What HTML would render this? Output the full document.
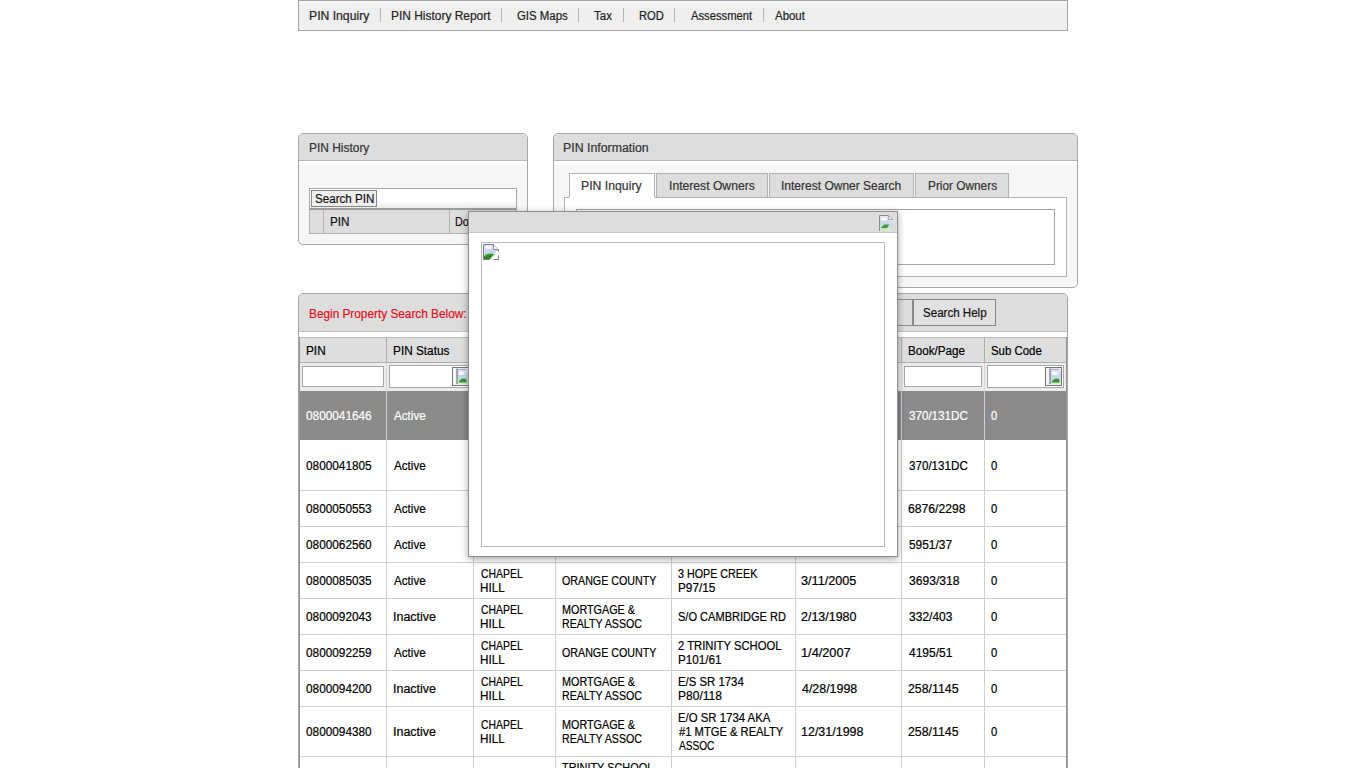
<!DOCTYPE html>
<html>
<head>
<meta charset="utf-8">
<title>PIN Inquiry</title>
<style>
html,body{margin:0;padding:0;}
body{width:1366px;height:768px;overflow:hidden;background:#fff;position:relative;font-family:"Liberation Sans",sans-serif;font-size:12px;color:#222;}
.a{position:absolute;box-sizing:border-box;}
.t{position:absolute;white-space:nowrap;line-height:14px;font-size:12px;transform-origin:0 0;-webkit-text-stroke:0.2px currentColor;}
#nav{left:298px;top:0;width:770px;height:31px;border:1px solid #a3a3a3;background:linear-gradient(#f7f7f7 0,#efefef 6px,#efefef 100%);}
.sep{position:absolute;top:8px;width:1px;height:14px;background:#b4b4b4;}
.panel{border:1px solid #a6a6a6;border-radius:5px;background:linear-gradient(to bottom,#fff 0,#fff 28px,#f6f6f6 33px,#f6f6f6 100%);}
.phead{position:absolute;left:0;top:0;right:0;height:26px;background:#ddd;border-bottom:1px solid #b7b7b7;border-radius:4px 4px 0 0;}
.tab{position:absolute;box-sizing:border-box;top:173px;height:25px;border:1px solid #b2b2b2;background:#ddd;}
.tab.on{background:#fff;border-bottom-color:#fff;}
.hc{position:absolute;box-sizing:border-box;top:337px;height:26px;background:#dedede;border-left:1px solid #b0b0b0;border-bottom:1px solid #b0b0b0;border-top:1px solid #b8b8b8;}
.fi{position:absolute;box-sizing:border-box;top:366px;height:21px;background:#fff;border:1px solid #a8a8a8;}
.vl{position:absolute;width:1px;background:#cfcfcf;}
.hl{position:absolute;height:1px;left:300px;width:766px;background:#cfcfcf;}
.cb{width:17px;height:19px;border:1px solid #767676;background:#f4f4f4;overflow:hidden;}
.cb svg{display:block;}
</style>
</head>
<body>

<svg width="0" height="0" style="position:absolute">
<defs>
<linearGradient id="sky" x1="0" y1="0" x2="0" y2="1"><stop offset="0" stop-color="#e6e8fb"/><stop offset="0.45" stop-color="#c9d3f3"/><stop offset="0.7" stop-color="#bfe6dc"/><stop offset="1" stop-color="#d6f3c8"/></linearGradient>
<g id="ic1">
 <path d="M0.5 0.5H10.5L15.5 5.5V15.5H0.5Z" fill="url(#sky)" stroke="#7d7d7d"/>
 <path d="M10.5 0.5V5.5H15.5" fill="#fff" stroke="#8a8a8a"/>
 <ellipse cx="5.5" cy="3.6" rx="3" ry="1.4" fill="#fff"/>
 <path d="M1 15V12.2Q4 9.2 8.5 9.6Q11 10 12.5 11.5L9 15Z" fill="#3f9436"/>
 <path d="M1 15V13.6Q4 11.3 8 11.6L10.5 12.6L8.5 15Z" fill="#2f7f2a"/>
 <path d="M9.6 15L13.6 11.2H15V15Z" fill="#fff"/>
 <path d="M6.2 16.5L12.6 9.6L13.2 7.6H16.5V11.2H13.6L9.6 16.5Z" fill="#fff"/>
 <path d="M7 15.6L13.2 9.2" stroke="#d9f7c9" stroke-width="1.3" fill="none"/>
</g>
<g id="ic2">
 <path d="M0.5 16V0.5H9.5" fill="none" stroke="#8a8a8a"/>
 <rect x="1" y="1" width="9" height="14" fill="url(#sky)"/>
 <path d="M9.5 0.5L14 4.5H9.5Z" fill="#f4f4f4" stroke="#9a9a9a" stroke-width="0.8"/>
 <rect x="10" y="5" width="5.5" height="10" fill="url(#sky)" opacity="0.45"/>
 <ellipse cx="5" cy="4.2" rx="3" ry="1.5" fill="#fff"/>
 <path d="M1.5 13.2L5 9.5H10.2L8 13.2Z" fill="#469640"/>
 <path d="M1 15.5H9L10 13.4H1Z" fill="#cdf0b8"/>
</g>
<g id="ic3">
 <rect x="0" y="0" width="15" height="17" fill="#f6f6f6"/>
 <rect x="4" y="1" width="11" height="15.5" fill="url(#sky)"/>
 <rect x="3.5" y="0.5" width="1" height="15.5" fill="#5a5e6e"/>
 <rect x="4" y="0.8" width="9" height="1" fill="#8e92a6" opacity="0.8"/>
 <ellipse cx="8.5" cy="5.2" rx="3" ry="1.6" fill="#fff"/>
 <path d="M5.5 14.6Q7 10.6 10.5 10.6Q13.5 10.6 13.5 12.5V14.6Z" fill="#3f9038"/>
</g>
</defs></svg>

<!-- top nav -->
<div class="a" id="nav"></div>
<div class="sep" style="left:380px"></div>
<div class="sep" style="left:501px"></div>
<div class="sep" style="left:578px"></div>
<div class="sep" style="left:623px"></div>
<div class="sep" style="left:674px"></div>
<div class="sep" style="left:763px"></div>

<!-- PIN History panel -->
<div class="a panel" style="left:298px;top:133px;width:230px;height:112px;"><div class="phead"></div></div>
<div class="a" style="left:309px;top:188px;width:208px;height:22px;background:linear-gradient(#fff 60%,#ececec 100%);border:1px solid #a6a6a6;border-bottom:2px solid #9c9c9c;"></div>
<div class="a" style="left:311px;top:190px;width:66px;height:17px;background:#efefef;border:1px solid #868686;"></div>
<div class="a" style="left:309px;top:210px;width:208px;height:24px;background:#ddd;border:1px solid #b0b0b0;border-top:none;"></div>
<div class="a" style="left:323px;top:210px;width:1px;height:23px;background:#b0b0b0;"></div>
<div class="a" style="left:449px;top:210px;width:1px;height:23px;background:#b0b0b0;"></div>

<!-- PIN Information panel -->
<div class="a panel" style="left:553px;top:133px;width:525px;height:155px;"><div class="phead"></div></div>
<div class="a" style="left:564px;top:197px;width:503px;height:80px;background:#fff;border:1px solid #b2b2b2;"></div>
<div class="a" style="left:576px;top:209px;width:479px;height:56px;background:#fff;border:1px solid #a2a2a2;"></div>
<div class="tab on" style="left:569px;width:86px;"></div>
<div class="tab" style="left:656px;width:112px;"></div>
<div class="tab" style="left:769px;width:145px;"></div>
<div class="tab" style="left:915px;width:94px;"></div>

<!-- search grid panel -->
<div class="a" style="left:298px;top:293px;width:770px;height:490px;border:1px solid #a3a3a3;border-radius:5px;background:#fff;"></div>
<div class="a" style="left:299px;top:294px;width:768px;height:38px;background:#ddd;border-radius:4px 4px 0 0;border-bottom:1px solid #c4c4c4;"></div>
<div class="a" style="left:830px;top:299px;width:83px;height:27px;background:#ddd;border:1px solid #8a8a8a;"></div>
<div class="a" style="left:913px;top:299px;width:83px;height:27px;background:#e1e1e1;border:1px solid #858585;"></div>
<!-- grid outer border -->
<div class="a" style="left:299px;top:337px;width:768px;height:440px;border:1px solid #979797;border-bottom:none;"></div>

<!-- header cells -->
<div class="hc" style="left:300px;width:86px;border-left:none;"></div>
<div class="hc" style="left:386px;width:87px;"></div>
<div class="hc" style="left:473px;width:82px;"></div>
<div class="hc" style="left:555px;width:116px;"></div>
<div class="hc" style="left:671px;width:124px;"></div>
<div class="hc" style="left:795px;width:106px;"></div>
<div class="hc" style="left:901px;width:83px;"></div>
<div class="hc" style="left:984px;width:82px;"></div>

<!-- filter row -->
<div class="a" style="left:300px;top:363px;width:766px;height:28px;background:#ececec;"></div>
<div class="a" style="left:386px;top:363px;width:1px;height:28px;background:#d6d6d6;"></div>
<div class="a" style="left:901px;top:363px;width:1px;height:28px;background:#d6d6d6;"></div>
<div class="a" style="left:984px;top:363px;width:1px;height:28px;background:#d6d6d6;"></div>
<div class="fi" style="left:302px;width:82px;"></div>
<div class="fi" style="left:389px;width:83px;top:365px;height:23px;"></div>
<div class="fi" style="left:904px;width:78px;"></div>
<div class="fi" style="left:987px;width:77px;top:365px;height:23px;"></div>
<!-- combo buttons -->
<div class="a cb" style="left:452px;top:367px;"><svg width="15" height="17" viewBox="0 0 15 17"><use href="#ic3"/></svg></div>
<div class="a cb" style="left:1045px;top:367px;"><svg width="15" height="17" viewBox="0 0 15 17"><use href="#ic3"/></svg></div>

<!-- selected row -->
<div class="a" style="left:300px;top:391px;width:766px;height:49px;background:#8b8b8b;"></div>

<!-- row lines -->
<div class="hl" style="top:490px"></div>
<div class="hl" style="top:526px"></div>
<div class="hl" style="top:562px"></div>
<div class="hl" style="top:598px"></div>
<div class="hl" style="top:634px"></div>
<div class="hl" style="top:670px"></div>
<div class="hl" style="top:706px"></div>
<div class="hl" style="top:756px"></div>
<div class="vl" style="left:386px;top:391px;height:378px;"></div>
<div class="vl" style="left:473px;top:391px;height:378px;"></div>
<div class="vl" style="left:555px;top:391px;height:378px;"></div>
<div class="vl" style="left:671px;top:391px;height:378px;"></div>
<div class="vl" style="left:795px;top:391px;height:378px;"></div>
<div class="vl" style="left:901px;top:391px;height:378px;"></div>
<div class="vl" style="left:984px;top:391px;height:378px;"></div>

<span class="t" style="left:308.78px;top:9px;color:#222;transform:scaleX(1.0158)">PIN Inquiry</span>
<span class="t" style="left:390.71px;top:9px;color:#222;transform:scaleX(0.9949)">PIN History Report</span>
<span class="t" style="left:516.91px;top:9px;color:#222;transform:scaleX(0.9508)">GIS Maps</span>
<span class="t" style="left:594.26px;top:9px;color:#222;transform:scaleX(0.9589)">Tax</span>
<span class="t" style="left:638.77px;top:9px;color:#222;transform:scaleX(0.9313)">ROD</span>
<span class="t" style="left:690.60px;top:9px;color:#222;transform:scaleX(0.9346)">Assessment</span>
<span class="t" style="left:774.80px;top:9px;color:#222;transform:scaleX(0.9530)">About</span>
<span class="t" style="left:308.71px;top:141px;color:#333;transform:scaleX(0.9945)">PIN History</span>
<span class="t" style="left:315.02px;top:192px;color:#111;transform:scaleX(0.9687)">Search PIN</span>
<span class="t" style="left:329.92px;top:215px;color:#111;transform:scaleX(0.9766)">PIN</span>
<span class="t" style="left:455.21px;top:215px;color:#111;transform:scaleX(0.8937)">Do</span>
<span class="t" style="left:563.47px;top:141px;color:#333;transform:scaleX(1.0279)">PIN Information</span>
<span class="t" style="left:581.48px;top:179px;color:#333;transform:scaleX(1.0210)">PIN Inquiry</span>
<span class="t" style="left:669.16px;top:179px;color:#333;transform:scaleX(1.0129)">Interest Owners</span>
<span class="t" style="left:780.97px;top:179px;color:#333;transform:scaleX(1.0006)">Interest Owner Search</span>
<span class="t" style="left:927.51px;top:179px;color:#333;transform:scaleX(0.9865)">Prior Owners</span>
<span class="t" style="left:308.52px;top:307px;color:#e0101c;transform:scaleX(0.9842)">Begin Property Search Below:</span>
<span class="t" style="left:923.02px;top:306px;color:#111;transform:scaleX(0.9628)">Search Help</span>
<span class="t" style="left:305.82px;top:344px;color:#000;transform:scaleX(0.9821)">PIN</span>
<span class="t" style="left:393.12px;top:344px;color:#000;transform:scaleX(0.9839)">PIN Status</span>
<span class="t" style="left:907.93px;top:344px;color:#000;transform:scaleX(0.9712)">Book/Page</span>
<span class="t" style="left:990.82px;top:344px;color:#000;transform:scaleX(0.9508)">Sub Code</span>
<span class="t" style="left:306.43px;top:409px;color:#fff;transform:scaleX(0.9837)">0800041646</span>
<span class="t" style="left:393.70px;top:409px;color:#fff;transform:scaleX(0.9712)">Active</span>
<span class="t" style="left:908.64px;top:409px;color:#fff;transform:scaleX(0.9687)">370/131DC</span>
<span class="t" style="left:991.15px;top:409px;color:#fff;transform:scaleX(0.9362)">0</span>
<span class="t" style="left:306.43px;top:459px;color:#000;transform:scaleX(0.9837)">0800041805</span>
<span class="t" style="left:393.70px;top:459px;color:#000;transform:scaleX(0.9712)">Active</span>
<span class="t" style="left:908.64px;top:459px;color:#000;transform:scaleX(0.9687)">370/131DC</span>
<span class="t" style="left:991.15px;top:459px;color:#000;transform:scaleX(0.9362)">0</span>
<span class="t" style="left:306.43px;top:502px;color:#000;transform:scaleX(0.9837)">0800050553</span>
<span class="t" style="left:393.70px;top:502px;color:#000;transform:scaleX(0.9712)">Active</span>
<span class="t" style="left:908.37px;top:502px;color:#000;transform:scaleX(1.0121)">6876/2298</span>
<span class="t" style="left:991.15px;top:502px;color:#000;transform:scaleX(0.9362)">0</span>
<span class="t" style="left:306.43px;top:538px;color:#000;transform:scaleX(0.9837)">0800062560</span>
<span class="t" style="left:393.70px;top:538px;color:#000;transform:scaleX(0.9712)">Active</span>
<span class="t" style="left:908.50px;top:538px;color:#000;transform:scaleX(0.9912)">5951/37</span>
<span class="t" style="left:991.15px;top:538px;color:#000;transform:scaleX(0.9362)">0</span>
<span class="t" style="left:306.43px;top:574px;color:#000;transform:scaleX(0.9837)">0800085035</span>
<span class="t" style="left:393.70px;top:574px;color:#000;transform:scaleX(0.9712)">Active</span>
<span class="t" style="left:908.62px;top:574px;color:#000;transform:scaleX(1.0076)">3693/318</span>
<span class="t" style="left:991.15px;top:574px;color:#000;transform:scaleX(0.9362)">0</span>
<span class="t" style="left:480.66px;top:567px;color:#000;transform:scaleX(0.8681)">CHAPEL</span>
<span class="t" style="left:480.22px;top:581px;color:#000;transform:scaleX(0.9750)">HILL</span>
<span class="t" style="left:562.06px;top:574px;color:#000;transform:scaleX(0.8893)">ORANGE COUNTY</span>
<span class="t" style="left:678.26px;top:567px;color:#000;transform:scaleX(0.8942)">3 HOPE CREEK</span>
<span class="t" style="left:677.62px;top:581px;color:#000;transform:scaleX(0.9802)">P97/15</span>
<span class="t" style="left:801.40px;top:574px;color:#000;transform:scaleX(1.0538)">3/11/2005</span>
<span class="t" style="left:306.43px;top:610px;color:#000;transform:scaleX(0.9837)">0800092043</span>
<span class="t" style="left:392.53px;top:610px;color:#000;transform:scaleX(1.0390)">Inactive</span>
<span class="t" style="left:908.62px;top:610px;color:#000;transform:scaleX(1.0024)">332/403</span>
<span class="t" style="left:991.15px;top:610px;color:#000;transform:scaleX(0.9362)">0</span>
<span class="t" style="left:480.66px;top:603px;color:#000;transform:scaleX(0.8681)">CHAPEL</span>
<span class="t" style="left:480.22px;top:617px;color:#000;transform:scaleX(0.9750)">HILL</span>
<span class="t" style="left:561.60px;top:603px;color:#000;transform:scaleX(0.9000)">MORTGAGE &amp;</span>
<span class="t" style="left:561.61px;top:617px;color:#000;transform:scaleX(0.8856)">REALTY ASSOC</span>
<span class="t" style="left:678.14px;top:610px;color:#000;transform:scaleX(0.9204)">S/O CAMBRIDGE RD</span>
<span class="t" style="left:801.15px;top:610px;color:#000;transform:scaleX(1.0387)">2/13/1980</span>
<span class="t" style="left:306.43px;top:646px;color:#000;transform:scaleX(0.9837)">0800092259</span>
<span class="t" style="left:393.70px;top:646px;color:#000;transform:scaleX(0.9712)">Active</span>
<span class="t" style="left:908.75px;top:646px;color:#000;transform:scaleX(0.9994)">4195/51</span>
<span class="t" style="left:991.15px;top:646px;color:#000;transform:scaleX(0.9362)">0</span>
<span class="t" style="left:480.66px;top:639px;color:#000;transform:scaleX(0.8681)">CHAPEL</span>
<span class="t" style="left:480.22px;top:653px;color:#000;transform:scaleX(0.9750)">HILL</span>
<span class="t" style="left:562.06px;top:646px;color:#000;transform:scaleX(0.8893)">ORANGE COUNTY</span>
<span class="t" style="left:678.01px;top:639px;color:#000;transform:scaleX(0.9382)">2 TRINITY SCHOOL</span>
<span class="t" style="left:677.63px;top:653px;color:#000;transform:scaleX(0.9716)">P101/61</span>
<span class="t" style="left:800.87px;top:646px;color:#000;transform:scaleX(1.0630)">1/4/2007</span>
<span class="t" style="left:306.43px;top:682px;color:#000;transform:scaleX(0.9837)">0800094200</span>
<span class="t" style="left:392.53px;top:682px;color:#000;transform:scaleX(1.0390)">Inactive</span>
<span class="t" style="left:908.36px;top:682px;color:#000;transform:scaleX(1.0286)">258/1145</span>
<span class="t" style="left:991.15px;top:682px;color:#000;transform:scaleX(0.9362)">0</span>
<span class="t" style="left:480.66px;top:675px;color:#000;transform:scaleX(0.8681)">CHAPEL</span>
<span class="t" style="left:480.22px;top:689px;color:#000;transform:scaleX(0.9750)">HILL</span>
<span class="t" style="left:561.60px;top:675px;color:#000;transform:scaleX(0.9000)">MORTGAGE &amp;</span>
<span class="t" style="left:561.61px;top:689px;color:#000;transform:scaleX(0.8856)">REALTY ASSOC</span>
<span class="t" style="left:677.65px;top:675px;color:#000;transform:scaleX(0.9471)">E/S SR 1734</span>
<span class="t" style="left:677.60px;top:689px;color:#000;transform:scaleX(1.0029)">P80/118</span>
<span class="t" style="left:801.54px;top:682px;color:#000;transform:scaleX(1.0337)">4/28/1998</span>
<span class="t" style="left:306.43px;top:725px;color:#000;transform:scaleX(0.9837)">0800094380</span>
<span class="t" style="left:392.53px;top:725px;color:#000;transform:scaleX(1.0390)">Inactive</span>
<span class="t" style="left:908.36px;top:725px;color:#000;transform:scaleX(1.0286)">258/1145</span>
<span class="t" style="left:991.15px;top:725px;color:#000;transform:scaleX(0.9362)">0</span>
<span class="t" style="left:480.66px;top:718px;color:#000;transform:scaleX(0.8681)">CHAPEL</span>
<span class="t" style="left:480.22px;top:732px;color:#000;transform:scaleX(0.9750)">HILL</span>
<span class="t" style="left:561.60px;top:718px;color:#000;transform:scaleX(0.9000)">MORTGAGE &amp;</span>
<span class="t" style="left:561.61px;top:732px;color:#000;transform:scaleX(0.8856)">REALTY ASSOC</span>
<span class="t" style="left:677.65px;top:711px;color:#000;transform:scaleX(0.9484)">E/O SR 1734 AKA</span>
<span class="t" style="left:678.60px;top:725px;color:#000;transform:scaleX(0.9327)">#1 MTGE &amp; REALTY</span>
<span class="t" style="left:678.60px;top:739px;color:#000;transform:scaleX(0.8434)">ASSOC</span>
<span class="t" style="left:800.89px;top:725px;color:#000;transform:scaleX(1.0405)">12/31/1998</span>
<span class="t" style="left:562.27px;top:761px;color:#000;transform:scaleX(0.9081)">TRINITY SCHOOL</span>

<!-- modal dialog -->
<div class="a" style="left:468px;top:211px;width:430px;height:346px;background:#fff;border:1px solid #8f8f8f;box-shadow:0 2px 7px rgba(0,0,0,0.36);"></div>
<div class="a" style="left:469px;top:212px;width:428px;height:21px;background:#ddd;border-bottom:1px solid #c6c6c6;"></div>
<div class="a" style="left:481px;top:242px;width:404px;height:305px;background:#fff;border:1px solid #bababa;"></div>

<svg class="a" style="left:879px;top:215px;" width="17" height="17" viewBox="0 0 17 17"><use href="#ic2"/></svg>
<svg class="a" style="left:483px;top:244px;" width="17" height="17" viewBox="0 0 17 17"><use href="#ic1"/></svg>
</body>
</html>
